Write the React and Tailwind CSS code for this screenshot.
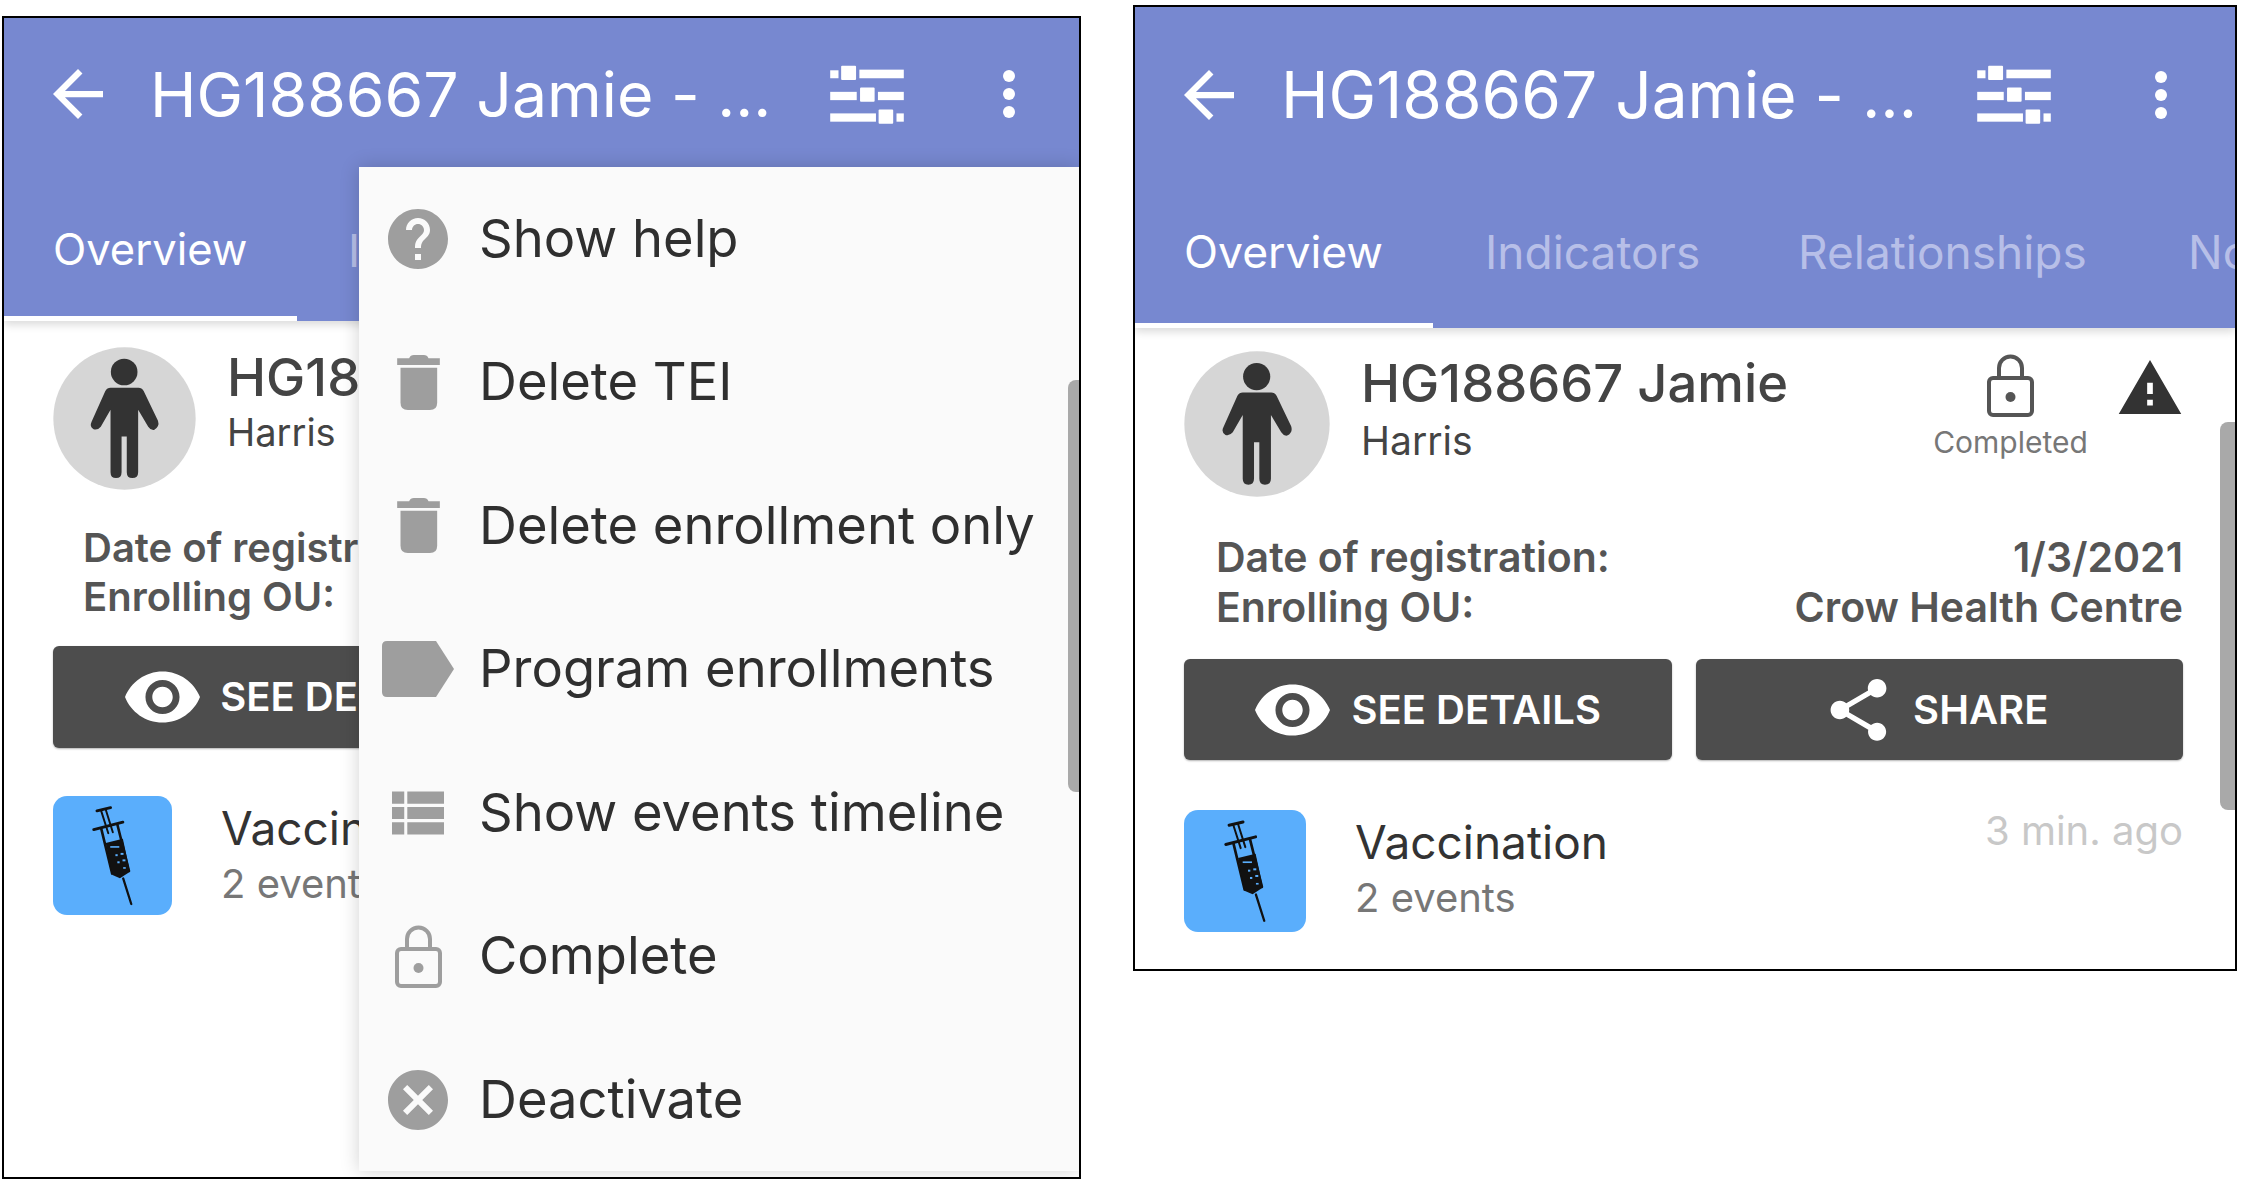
const BACK = 'M20 11H7.83l5.59-5.59L12 4l-8 8 8 8 1.41-1.41L7.83 13H20v-2z'
const HELP = 'M12 2C6.48 2 2 6.48 2 12s4.48 10 10 10 10-4.48 10-10S17.52 2 12 2zm1 17h-2v-2h2v2zm2.07-7.75l-.9.92C13.45 12.9 13 13.5 13 15h-2v-.5c0-1.1.45-2.1 1.17-2.83l1.24-1.26c.37-.36.59-.86.59-1.41 0-1.1-.9-2-2-2s-2 .9-2 2H8c0-2.21 1.79-4 4-4s4 1.79 4 4c0 .88-.36 1.68-.93 2.25z'
const CANCEL = 'M12 2C6.47 2 2 6.47 2 12s4.47 10 10 10 10-4.47 10-10S17.53 2 12 2zm5 13.59L15.59 17 12 13.41 8.41 17 7 15.59 10.59 12 7 8.41 8.41 7 12 10.59 15.59 7 17 8.41 13.41 12 17 15.59z'
const EYE = 'M12 4.5C7 4.5 2.73 7.61 1 12c1.73 4.39 6 7.5 11 7.5s9.27-3.11 11-7.5c-1.73-4.39-6-7.5-11-7.5zM12 17c-2.76 0-5-2.24-5-5s2.24-5 5-5 5 2.24 5 5-2.24 5-5 5zm0-8c-1.66 0-3 1.34-3 3s1.34 3 3 3 3-1.34 3-3-1.34-3-3-3z'
const SHARE = 'M18 16.08c-.76 0-1.44.3-1.96.77L8.91 12.7c.05-.23.09-.46.09-.7s-.04-.47-.09-.7l7.05-4.11c.54.5 1.25.81 2.04.81 1.66 0 3-1.34 3-3s-1.34-3-3-3-3 1.34-3 3c0 .24.04.47.09.7L8.04 9.81C7.5 9.31 6.79 9 6 9c-1.66 0-3 1.34-3 3s1.34 3 3 3c.79 0 1.5-.31 2.04-.81l7.12 4.16c-.05.21-.08.43-.08.65 0 1.61 1.31 2.92 2.92 2.92 1.61 0 2.92-1.31 2.92-2.92s-1.31-2.92-2.92-2.92z'
const WARNING = 'M1 21h22L12 2 1 21zm12-3h-2v-2h2v2zm0-4h-2v-4h2v4z'
const LIST = 'M4 14h4v-4H4v4zm0 5h4v-4H4v4zM4 9h4V5H4v4zm5 5h12v-4H9v4zm0 5h12v-4H9v4zM9 5v4h12V5H9z'

function Sliders({ className }) {
  return (
    <svg viewBox="80 72 222 178" className={className} fill="#fff">
      <rect x="80" y="88" width="25" height="24" />
      <rect x="113" y="74" width="45" height="43" rx="3" />
      <rect x="168" y="86" width="134" height="26" />
      <rect x="80" y="153" width="80" height="25" />
      <rect x="170" y="140" width="44" height="43" rx="3" />
      <rect x="224" y="153" width="78" height="25" />
      <rect x="80" y="218" width="138" height="25" />
      <rect x="226" y="206" width="44" height="43" rx="3" />
      <rect x="280" y="218" width="22" height="25" />
    </svg>
  )
}

function Dots({ className }) {
  return (
    <svg viewBox="0 0 12 48" className={className} fill="#fff">
      <circle cx="6" cy="6" r="6" />
      <circle cx="6" cy="24" r="6" />
      <circle cx="6" cy="42" r="6" />
    </svg>
  )
}

function Person() {
  return (
    <svg viewBox="72 35 438 440" className="h-full w-full">
      <circle cx="291" cy="255" r="219" fill="#d6d6d6" />
      <circle cx="290" cy="112" r="41" fill="#333" />
      <path
        fill="#333"
        d="M248 160H334Q344 160 350 170L394 262Q400 280 382 290Q372 292 364 280L333 228V420Q333 438 315 438Q298 438 298 420V310H282V420Q282 438 265 438Q248 438 248 420V228L218 280Q208 292 196 288Q182 280 190 264L232 170Q238 160 248 160Z"
      />
    </svg>
  )
}

function Syringe() {
  return (
    <svg viewBox="42 60 366 368" className="h-full w-full">
      <g stroke="#111" fill="none" strokeLinecap="round">
        <path d="M177 106L219 96" strokeWidth="9" />
        <path d="M167 164L257 141" strokeWidth="9" />
        <path d="M190 106L212 175M204 102L226 172" strokeWidth="6" />
        <path d="M190 160L224 300M240 148L276 292" strokeWidth="8" />
        <path d="M258 315L283 394" strokeWidth="7" />
      </g>
      <path d="M204 205L257 192L279 294L248 314L225 304Z" fill="#111" />
      <g fill="#5aaefc">
        <rect x="218" y="215" width="28" height="5" />
        <rect x="250" y="236" width="9" height="6" />
        <rect x="256" y="256" width="9" height="6" />
        <rect x="234" y="240" width="7" height="6" />
        <rect x="240" y="262" width="7" height="6" />
        <rect x="258" y="280" width="8" height="5" />
      </g>
    </svg>
  )
}

function LockIcon({ color, className }) {
  return (
    <svg viewBox="0 0 47 63" className={className} fill="none">
      <path d="M12 24V14a11.5 11.5 0 0 1 23 0V24" stroke={color} strokeWidth="4" />
      <rect x="2" y="24" width="43" height="37" rx="4" stroke={color} strokeWidth="4" />
      <circle cx="23.5" cy="43" r="5" fill={color} />
    </svg>
  )
}

function Trash() {
  return (
    <svg viewBox="82 493 128 165" className="h-[55px] w-[43px]" fill="#9e9e9e">
      <path d="M82 503H118Q122 493 132 493H162Q172 493 176 503H210V523H82Z" />
      <path d="M92 531H202V636Q202 658 180 658H114Q92 658 92 636Z" />
    </svg>
  )
}

function MenuIcon({ name }) {
  if (name === 'help' || name === 'cancel') {
    return (
      <svg viewBox="2 2 20 20" className="h-[60px] w-[60px]" fill="#9e9e9e">
        <path d={name === 'help' ? HELP : CANCEL} />
      </svg>
    )
  }
  if (name === 'trash') return <Trash />
  if (name === 'tag') {
    return (
      <svg viewBox="0 0 72 56" className="h-[56px] w-[72px]" fill="#9e9e9e">
        <path d="M5 0H54L72 28L54 56H5Q0 56 0 51V5Q0 0 5 0Z" />
      </svg>
    )
  }
  if (name === 'list') {
    return (
      <svg viewBox="4 5 17 14" className="h-[44px] w-[52px]" fill="#9e9e9e">
        <path d={LIST} />
      </svg>
    )
  }
  return <LockIcon color="#9e9e9e" className="h-[63px] w-[47px]" />
}

const MENU = [
  ['help', 'Show help'],
  ['trash', 'Delete TEI'],
  ['trash', 'Delete enrollment only'],
  ['tag', 'Program enrollments'],
  ['list', 'Show events timeline'],
  ['lock', 'Complete'],
  ['cancel', 'Deactivate'],
]

function Menu() {
  return (
    <div className="absolute top-[149px] right-0 bottom-[6px] left-[355px] flex flex-col bg-[#fafafa] shadow-[0_0_18px_rgba(0,0,0,0.18)]">
      {MENU.map(([icon, label]) => (
        <div key={label} className="flex h-[143.5px] shrink-0 items-center">
          <div className="flex w-[118px] shrink-0 justify-center">
            <MenuIcon name={icon} />
          </div>
          <span className="ml-[2px] pb-[2px] text-[52.5px] leading-none text-[#2f2f2f]">{label}</span>
        </div>
      ))}
    </div>
  )
}

function Tabs({ left }) {
  return (
    <div className={left ? 'flex h-[151px] overflow-hidden pt-[4px] text-[45px]' : 'flex h-[149px] overflow-hidden text-[46px]'}>
      <div className={left ? 'flex w-[293px] shrink-0 items-center border-b-[5px] border-white pt-[9px] pl-[49px] text-[43.5px] text-white' : 'flex w-[298px] shrink-0 items-center border-b-[5px] border-white pt-[3px] pl-[49px] text-[44.5px] text-white'}>
        Overview
      </div>
      <div className={left ? 'flex w-[315px] shrink-0 items-center pt-[6px] pl-[51px] text-[#b7bfe8]' : 'flex w-[317px] shrink-0 items-center pb-[3px] pl-[52px] text-[#b7bfe8]'}>
        Indicators
      </div>
      <div className="flex w-[390px] shrink-0 items-center pb-[3px] pl-[48px] text-[#b7bfe8]">Relationships</div>
      <div className="flex w-[100px] shrink-0 items-center pb-[3px] pl-[48px] text-[#b7bfe8]">Notes</div>
    </div>
  )
}

function AppBar({ left }) {
  return (
    <div className="relative bg-[#7788d0] shadow-[0_4px_8px_rgba(0,0,0,0.14)]">
      <div className={left ? 'flex h-[152px] items-center pl-[49px] text-white' : 'flex h-[172px] items-center pt-[3px] pl-[49px] text-white'}>
        <svg viewBox="4 4 16 16" className="h-[50px] w-[50px] shrink-0" fill="#fff">
          <path d={BACK} />
        </svg>
        <span className={left ? 'ml-[47px] w-[620px] shrink-0 text-[62.5px] leading-none whitespace-nowrap' : 'ml-[47px] w-[633px] shrink-0 text-[64px] leading-none whitespace-nowrap'}>
          HG188667 Jamie - ...
        </span>
        <Sliders className={left ? 'ml-[60px] h-[59px] w-[74px] shrink-0' : 'ml-[63px] h-[59px] w-[74px] shrink-0'} />
        <Dots className={left ? 'ml-[99px] h-[48px] w-[12px] shrink-0' : 'ml-[104px] h-[48px] w-[12px] shrink-0'} />
      </div>
      <Tabs left={left} />
    </div>
  )
}

function Body({ left }) {
  return (
    <div className={left ? 'pt-[26px] pl-[49px] pr-[49px]' : 'pt-[23px] pl-[49px] pr-[52px]'}>
      <div className="flex">
        <div className={left ? 'h-[143px] w-[143px] shrink-0' : 'h-[146px] w-[146px] shrink-0'}>
          <Person />
        </div>
        <div className={left ? 'ml-[31px] flex-1 pt-[4px]' : 'ml-[31px] flex-1 pt-[6px]'}>
          <p className="text-[52.5px] leading-[52px] font-medium whitespace-nowrap text-[#444]">HG188667 Jamie</p>
          <p className={left ? 'mt-[10px] text-[38px] leading-[39px] text-[#444]' : 'mt-[12px] text-[39px] leading-[39px] text-[#444]'}>Harris</p>
        </div>
        <div className="mt-[3px] flex w-[155px] flex-col items-center">
          <LockIcon color="#555" className="h-[63px] w-[49px]" />
          <p className="mt-[9px] text-[30px] leading-[32px] text-[#777]">Completed</p>
        </div>
        <svg viewBox="1 2 22 19" className="mt-[9px] ml-[29px] h-[54px] w-[66px] shrink-0" fill="#333">
          <path d={WARNING} />
        </svg>
      </div>
      <div className={left ? 'mt-[33px] pl-[30px] text-[40px] leading-[49px] font-semibold text-[#555]' : 'mt-[35px] pl-[32px] text-[41px] leading-[50px] font-semibold text-[#555]'}>
        <div className="flex justify-between">
          <span>Date of registration:</span>
          <span>1/3/2021</span>
        </div>
        <div className="flex justify-between">
          <span>Enrolling OU:</span>
          <span>Crow Health Centre</span>
        </div>
      </div>
      <div className={left ? 'mt-[25px] flex gap-[24px]' : 'mt-[27px] flex gap-[24px]'}>
        <div className={left ? 'flex h-[102px] flex-1 items-center justify-center gap-[20px] rounded-[6px] bg-[#4d4d4d] text-[40px] font-semibold text-white shadow-[0_1px_2px_rgba(0,0,0,0.3)]' : 'flex h-[101px] flex-1 items-center justify-center gap-[22px] rounded-[6px] bg-[#4d4d4d] text-[40px] font-semibold text-white shadow-[0_1px_2px_rgba(0,0,0,0.3)]'}>
          <svg viewBox="1 4.5 22 15" className="h-[52px] w-[75px]" fill="#fff">
            <path d={EYE} />
          </svg>
          SEE DETAILS
        </div>
        <div className="flex h-[101px] flex-1 items-center justify-center gap-[26px] rounded-[6px] bg-[#4d4d4d] text-[40px] font-semibold text-white shadow-[0_1px_2px_rgba(0,0,0,0.3)]">
          <svg viewBox="3 2 18 20" className="h-[62px] w-[57px]" fill="#fff">
            <path d={SHARE} />
          </svg>
          SHARE
        </div>
      </div>
      <div className={left ? 'mt-[48px] flex' : 'mt-[50px] flex'}>
        <div className={left ? 'h-[119px] w-[119px] shrink-0 overflow-hidden rounded-[14px] bg-[#5aaefc]' : 'h-[122px] w-[122px] shrink-0 overflow-hidden rounded-[14px] bg-[#5aaefc]'}>
          <Syringe />
        </div>
        <div className={left ? 'ml-[49px] flex-1 pt-[9px]' : 'ml-[49px] flex-1 pt-[9px]'}>
          <p className="text-[46px] leading-[46px] text-[#333]">Vaccination</p>
          <p className="mt-[13px] text-[40px] leading-[40px] text-[#777]">2 events</p>
        </div>
        <p className="pt-[1px] text-[40px] leading-[40px] text-[#c8c8c8]">3 min. ago</p>
      </div>
    </div>
  )
}

export default function App() {
  return (
    <div className="flex h-[1187px] w-[2245px] items-start overflow-hidden bg-white font-['Inter',sans-serif]">
      <div className="relative mt-[16px] ml-[2px] h-[1163px] w-[1079px] shrink-0 overflow-hidden border-2 border-black">
        <div className="w-[1100px]">
          <AppBar left />
          <Body left />
        </div>
        <Menu />
        <div className="absolute top-[362px] right-0 h-[412px] w-[11px] rounded-l-[8px] bg-[#a9a9a9]" />
      </div>
      <div className="relative mt-[5px] ml-[52px] h-[966px] w-[1104px] shrink-0 overflow-hidden border-2 border-black">
        <AppBar />
        <Body />
        <div className="absolute top-[415px] right-0 h-[388px] w-[15px] rounded-l-[8px] bg-[#a9a9a9]" />
      </div>
    </div>
  )
}
